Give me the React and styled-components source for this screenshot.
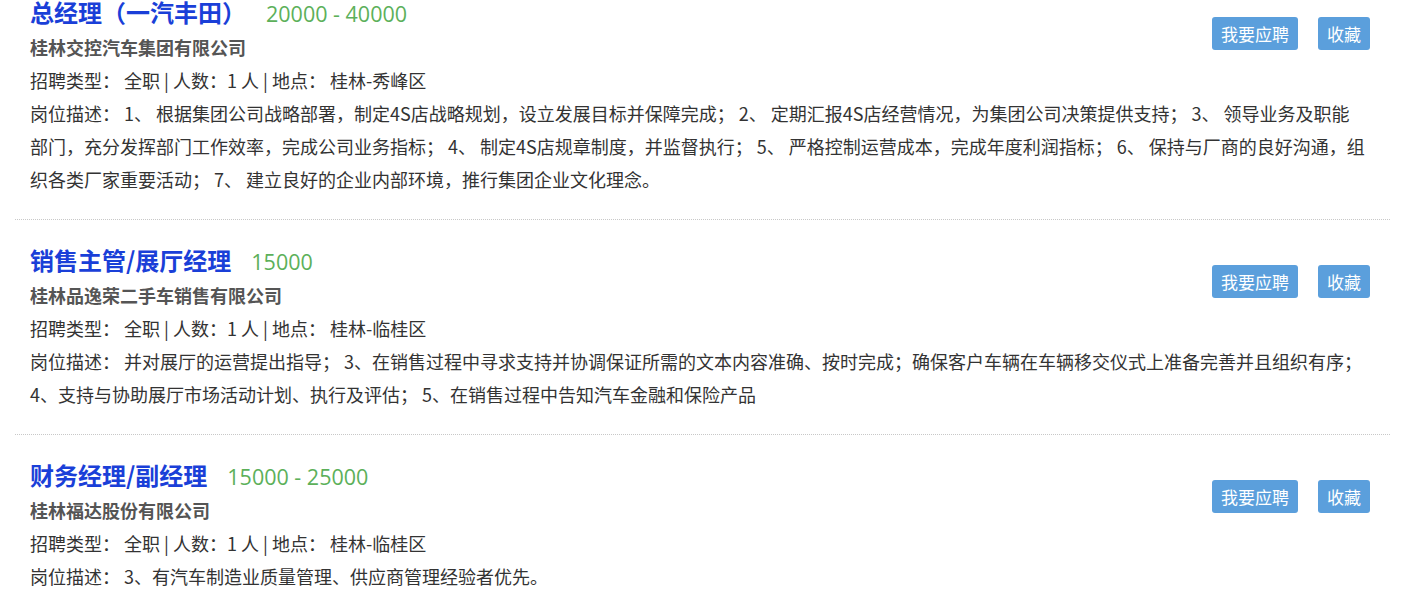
import styled, { createGlobalStyle } from 'styled-components';

const GlobalStyle = createGlobalStyle`
	body {
		margin: 0;
		background: #ffffff;
		font-family: "Noto Sans CJK SC", "Noto Sans", sans-serif;
		color: #333333;
		overflow: hidden;
	}
`;

const List = styled.div`
	margin-top: -28px;
	padding: 0 14px 0 15px;
`;

const Item = styled.div`
	display: grid;
	grid-template-columns: 1fr auto;
	padding: 23px 25px 23px 15px;
	border-bottom: 1px dotted #c8c8c8;
`;

const TitleRow = styled.div`
	grid-column: 1;
	grid-row: 1;
	display: flex;
	align-items: baseline;
	gap: 20px;
	height: 36px;
	line-height: 34px;
`;

const Title = styled.span`
	font-size: 24px;
	font-weight: 700;
	color: #1a3fd8;
`;

const Salary = styled.span`
	font-family: "Open Sans", "Noto Sans CJK SC", sans-serif;
	font-size: 21.5px;
	color: #5cb05a;
`;

const Company = styled.div`
	grid-column: 1;
	grid-row: 2;
	font-size: 18px;
	font-weight: 700;
	color: #555555;
	line-height: 33px;
`;

const Actions = styled.div`
	grid-column: 2;
	grid-row: 1 / span 2;
	align-self: start;
	display: flex;
	gap: 20px;
	margin-top: 22px;
	margin-right: -5px;
`;

const Button = styled.button`
	height: 33px;
	padding: 0 9px;
	border: none;
	border-radius: 3px;
	background-color: #5b9fdc;
	color: #ffffff;
	font-family: "Noto Sans CJK SC", sans-serif;
	font-size: 17px;
	cursor: pointer;
`;

const Line = styled.div`
	grid-column: 1 / -1;
	font-size: 18px;
	line-height: 33px;
	color: #333333;
`;

const jobs = [
	{
		title: '总经理（一汽丰田）',
		salary: '20000 - 40000',
		company: '桂林交控汽车集团有限公司',
		place: '桂林-秀峰区',
		desc: '1、 根据集团公司战略部署，制定4S店战略规划，设立发展目标并保障完成； 2、 定期汇报4S店经营情况，为集团公司决策提供支持； 3、 领导业务及职能部门，充分发挥部门工作效率，完成公司业务指标； 4、 制定4S店规章制度，并监督执行； 5、 严格控制运营成本，完成年度利润指标； 6、 保持与厂商的良好沟通，组织各类厂家重要活动； 7、 建立良好的企业内部环境，推行集团企业文化理念。',
	},
	{
		title: '销售主管/展厅经理',
		salary: '15000',
		company: '桂林品逸荣二手车销售有限公司',
		place: '桂林-临桂区',
		desc: '并对展厅的运营提出指导； 3、在销售过程中寻求支持并协调保证所需的文本内容准确、按时完成；确保客户车辆在车辆移交仪式上准备完善并且组织有序； 4、支持与协助展厅市场活动计划、执行及评估； 5、在销售过程中告知汽车金融和保险产品',
	},
	{
		title: '财务经理/副经理',
		salary: '15000 - 25000',
		company: '桂林福达股份有限公司',
		place: '桂林-临桂区',
		desc: '3、有汽车制造业质量管理、供应商管理经验者优先。',
	},
];

const App = () => {
	return (
		<>
			<GlobalStyle />
			<List>
				{jobs.map((job, index) => (
					<Item key={index}>
						<TitleRow>
							<Title>{job.title}</Title>
							<Salary>{job.salary}</Salary>
						</TitleRow>
						<Company>{job.company}</Company>
						<Actions>
							<Button>我要应聘</Button>
							<Button>收藏</Button>
						</Actions>
						<Line>招聘类型： 全职 | 人数：1 人 | 地点： {job.place}</Line>
						<Line>岗位描述： {job.desc}</Line>
					</Item>
				))}
			</List>
		</>
	);
};

export default App;
